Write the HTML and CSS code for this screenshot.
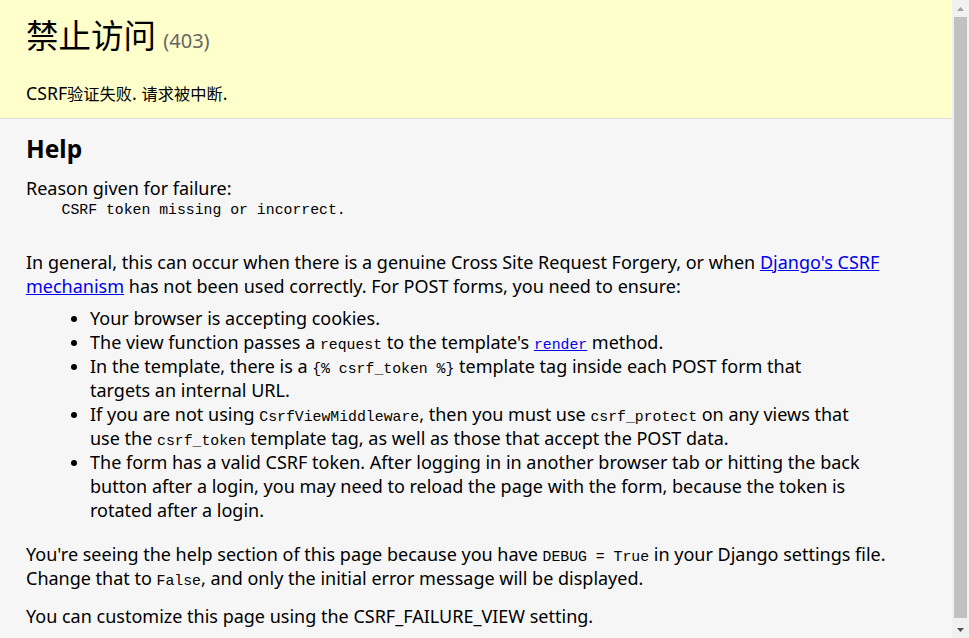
FILE: index.html
```html
<!DOCTYPE html>
<html lang="zh-CN">
<head>
<meta charset="utf-8">
<title>403 Forbidden</title>
<link rel="stylesheet" href="styles.css">
</head>
<body>
<div class="window">
  <main class="page">
    <div class="summary">
      <h1 class="title">禁止访问 <span class="code-num">(403)</span></h1>
      <p class="main-msg"><span class="lat">CSRF</span>验证失败<span class="lat">. </span>请求被中断<span class="lat">.</span></p>
    </div>
    <div class="info">
      <h2 class="help">Help</h2>
      <p class="reason">Reason given for failure:</p>
      <pre class="reason-text">    CSRF token missing or incorrect.
    </pre>
      <p class="para">In general, this can occur when there is a genuine Cross Site Request Forgery, or when <a href="#">Django's CSRF mechanism</a> has not been used correctly. For POST forms, you need to ensure:</p>
      <ul class="checks">
        <li>Your browser is accepting cookies.</li>
        <li>The view function passes a <code>request</code> to the template's <a href="#"><code>render</code></a> method.</li>
        <li>In the template, there is a <code>{% csrf_token %}</code> template tag inside each POST form that targets an internal URL.</li>
        <li>If you are not using <code>CsrfViewMiddleware</code>, then you must use <code>csrf_protect</code> on any views that use the <code>csrf_token</code> template tag, as well as those that accept the POST data.</li>
        <li>The form has a valid CSRF token. After logging in in another browser tab or hitting the back button after a login, you may need to reload the page with the form, because the token is rotated after a login.</li>
      </ul>
      <p class="para">You're seeing the help section of this page because you have <code>DEBUG = True</code> in your Django settings file. Change that to <code>False</code>, and only the initial error message will be displayed.</p>
      <p class="para last">You can customize this page using the CSRF_FAILURE_VIEW setting.</p>
    </div>
  </main>
  <div class="scrollbar">
    <div class="sb-btn">
      <svg width="7" height="4" viewBox="0 0 7 4"><path d="M3.5 0L7 4H0z" fill="#a3a3a3"/></svg>
    </div>
    <div class="sb-track"><div class="sb-thumb"></div></div>
    <div class="sb-btn">
      <svg width="7" height="4" viewBox="0 0 7 4"><path d="M0 0H7L3.5 4z" fill="#505050"/></svg>
    </div>
  </div>
</div>
</body>
</html>
```
FILE: styles.css
```css
html, body {
  margin: 0;
  padding: 0;
  height: 100%;
  overflow: hidden;
}
body {
  font-family: "Noto Sans", "Noto Sans CJK SC", sans-serif;
  font-size: 18px;
  line-height: 24px;
  color: #000;
  background: #eee;
}
.window {
  display: flex;
  height: 638px;
  overflow: hidden;
}
.page {
  flex: 1;
  min-width: 0;
  overflow: hidden;
  background: #eee;
}
.summary {
  background: #ffc;
  border-bottom: 1px solid #ddd;
  padding: 13px 26px 12px;
}
.title {
  margin: 0 0 14px;
  font-family: "Noto Sans CJK SC", sans-serif;
  font-size: 32.5px;
  line-height: 42px;
  font-weight: normal;
}
.code-num {
  font-family: "Noto Sans", sans-serif;
  font-size: 20px;
  line-height: 1;
  color: #666;
}
.main-msg {
  margin: 0;
  padding-top: 12px;
  padding-bottom: 1px;
  font-family: "Noto Sans CJK SC", sans-serif;
  font-size: 16.25px;
}
.lat {
  font-family: "Noto Sans", sans-serif;
  font-size: 17.7px;
  line-height: 1;
}
.info {
  background: #f6f6f6;
  border-bottom: 1px solid #ddd;
  padding: 12px 26px 20px;
}
.help {
  margin: 0;
  font-size: 24.5px;
  line-height: 36px;
  font-weight: bold;
}
.reason {
  margin: 0;
  padding-top: 9px;
}
.reason-text {
  margin: 0;
  font-family: "Liberation Mono", monospace;
  font-size: 14.8px;
  line-height: 19px;
  padding-top: 1px;
}
.para {
  margin: 0;
  padding-top: 11px;
}
.para.last {
  padding-top: 14px;
}
code {
  font-family: "Liberation Mono", monospace;
  font-size: 14.8px;
  line-height: 1;
}
a {
  color: #0000ee;
}
.checks {
  margin: 8px 64px 9px;
  padding: 0;
}
.scrollbar {
  width: 17px;
  flex: none;
  background: #f1f1f1;
  display: flex;
  flex-direction: column;
}
.sb-btn {
  height: 17px;
  display: flex;
  align-items: center;
  justify-content: center;
}
.sb-btn svg {
  display: block;
}
.sb-track {
  flex: 1;
  padding: 0 2px 3px;
  display: flex;
}
.sb-thumb {
  flex: 1;
  background: #c1c1c1;
}
```
